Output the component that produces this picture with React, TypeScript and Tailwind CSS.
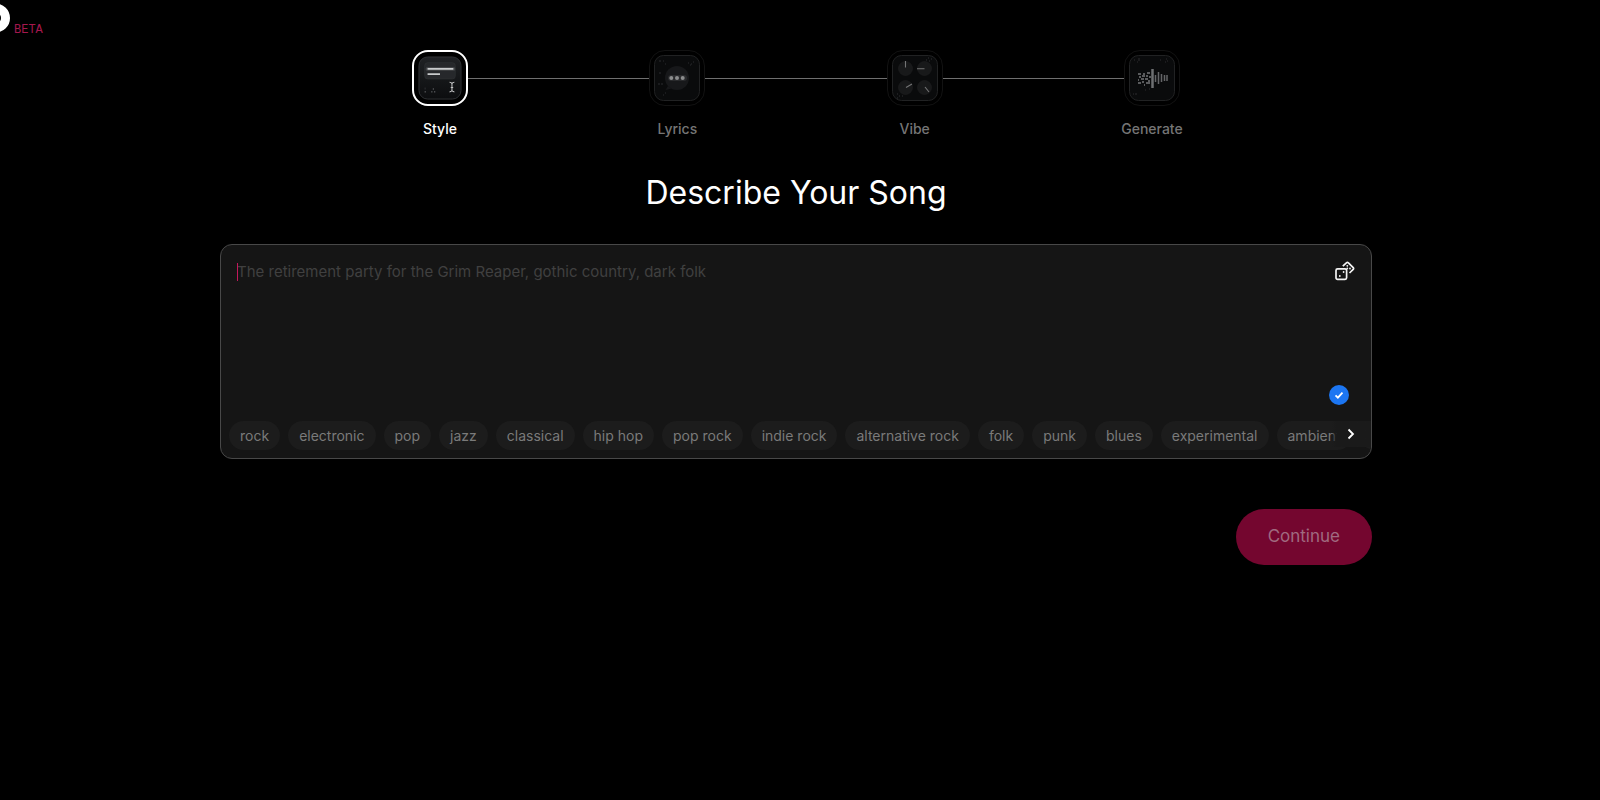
import { Fragment, useState } from "react";
import type { ReactNode } from "react";

const genres = [
  "rock",
  "electronic",
  "pop",
  "jazz",
  "classical",
  "hip hop",
  "pop rock",
  "indie rock",
  "alternative rock",
  "folk",
  "punk",
  "blues",
  "experimental",
  "ambient",
  "soul",
];

function StyleArt() {
  return (
    <svg viewBox="0 0 46 46" className="h-full w-full" aria-hidden="true">
      <defs>
        <linearGradient id="tile" x1="0" y1="0" x2="0" y2="1">
          <stop offset="0" stopColor="#202225" />
          <stop offset="1" stopColor="#0c0d0f" />
        </linearGradient>
      </defs>
      <rect x="1" y="1" width="44" height="44" rx="9" fill="url(#tile)" stroke="#303235" />
      <rect x="7" y="7" width="32" height="17" rx="3" fill="#26282b" stroke="#323437" strokeWidth="0.6" />
      <path d="M10 13.5H37" stroke="#6d6f72" strokeWidth="4" opacity="0.4" strokeLinecap="round" />
      <path d="M10 13.5H37M10 19H23" stroke="#c8cacc" strokeWidth="1.8" />
      <path d="M33 27.5q2 0 2.5 1.5q.5-1.5 2.5-1.5M33 37.5q2 0 2.5-1.5q.5 1.5 2.5 1.5M35.5 29v7M34.2 33h2.6" fill="none" stroke="#c4c5c6" strokeWidth="1.1" />
      <g fill="#94969a">
        <rect x="7" y="37" width="1" height="1" />
        <rect x="14" y="37" width="1" height="1" />
        <rect x="17" y="37" width="1" height="1" />
        <rect x="15.5" y="34" width="1" height="1" />
        <rect x="7" y="33" width="0.8" height="2" opacity="0.3" />
      </g>
    </svg>
  );
}

function LyricsArt() {
  return (
    <svg viewBox="0 0 46 46" className="h-full w-full" aria-hidden="true">
      <rect x="0.5" y="0.5" width="45" height="45" rx="9" fill="#0a0b0c" stroke="#212223" />
      <circle cx="23" cy="23" r="12" fill="#17181a" />
      <path d="M14 31l-2.5 4 6-1.5z" fill="#17181a" />
      <path d="M17 23H30" stroke="#3c3d3f" strokeWidth="6" strokeLinecap="round" opacity="0.5" />
      <g fill="#8c8d8e">
        <circle cx="17.3" cy="23" r="2" />
        <circle cx="23" cy="23" r="2" />
        <circle cx="28.7" cy="23" r="2" />
      </g>
      <path
        d="M5 6h2M9 6h1M11 9h1M34 8h1M37 9h1M39 7h1M36 10h1M5 18h2M4 29h2M7 29h2M9 40h1M11 38h1"
        stroke="#2b2c2e"
      />
    </svg>
  );
}

function VibeArt() {
  return (
    <svg viewBox="0 0 46 46" className="h-full w-full" aria-hidden="true">
      <rect x="0.5" y="0.5" width="45" height="45" rx="9" fill="#0a0b0c" stroke="#212223" />
      <g fill="#18191a" stroke="#1e1f20" strokeWidth="0.6">
        <circle cx="13.5" cy="13.5" r="7" />
        <circle cx="32.5" cy="13.5" r="7" />
        <circle cx="13.5" cy="32.5" r="7" />
        <circle cx="32.5" cy="32.5" r="7" />
      </g>
      <path d="M13.5 6v6.5M25 13.7h7.5M14 32.5l6-3.5M33 32l4 5" stroke="#747576" strokeWidth="1.1" fill="none" />
      <path d="M34 5h1M36 3h1M39 4h1M37 6h1M5 43h1M7 41h1M10 41h1M5 39h1" stroke="#2f3032" />
    </svg>
  );
}

function GenerateArt() {
  return (
    <svg viewBox="0 0 46 46" className="h-full w-full" aria-hidden="true">
      <rect x="0.5" y="0.5" width="45" height="45" rx="9" fill="#0a0b0c" stroke="#212223" />
      <path
        d="M9 19h3M14 19h2M18 18h3M10 22h2M13 21h3M17 21h2M20 22h2M9 25h1M12 24h3M16 24h3M19 26h2M9 28h3M13 27h2M17 28h4M15 30h1"
        stroke="#747577"
        strokeWidth="1.4"
      />
      <path d="M23.5 14v19" stroke="#6e7072" strokeWidth="2.5" />
      <path d="M26.5 20v7M29.5 17v12M32.5 19v8M35.5 20v6M38 20v6" stroke="#646567" strokeWidth="1.5" />
      <path d="M5 5h1M10 3v3M8 7h1M31 5h1M37 4h1M36 7h1M38 6h1M16 35h1M20 34h1M4 39h1M7 38v2" stroke="#2c2d2f" />
    </svg>
  );
}

const steps: { label: string; art: ReactNode }[] = [
  { label: "Style", art: <StyleArt /> },
  { label: "Lyrics", art: <LyricsArt /> },
  { label: "Vibe", art: <VibeArt /> },
  { label: "Generate", art: <GenerateArt /> },
];

function DiceIcon() {
  return (
    <svg width="20" height="20" viewBox="0 0 20 20" fill="none" stroke="#f4f4f4" strokeWidth="1.7" strokeLinejoin="round" aria-hidden="true">
      <rect x="1" y="7.8" width="10.6" height="10.6" rx="1.6" />
      <path d="M7.8 5.2l3.6-3.4q1-.9 2 0l4.8 4.8q.8.9 0 1.8L14.5 12" />
      <g fill="#f4f4f4" stroke="none">
        <circle cx="8.6" cy="11" r="0.9" />
        <circle cx="4.8" cy="15" r="0.9" />
        <circle cx="12.3" cy="4.8" r="0.9" />
        <circle cx="15" cy="7.5" r="0.9" />
        <circle cx="12.3" cy="7.5" r="0.9" />
      </g>
    </svg>
  );
}

export default function App() {
  const [prompt, setPrompt] = useState("");

  const addGenre = (genre: string) => {
    setPrompt(prompt ? `${prompt}, ${genre}` : genre);
  };

  return (
    <div className="relative min-h-screen overflow-hidden bg-black pr-2 font-['Inter',sans-serif] text-white">
      {/* Logo, partly off the left edge */}
      <a href="#" aria-label="Home" className="absolute top-0 left-0 flex">
        <svg width="14" height="36" viewBox="0 0 14 36" aria-hidden="true">
          <circle cx="-4.5" cy="18" r="10" fill="none" stroke="#fff" strokeWidth="9" />
        </svg>
        <span className="mt-[22px] font-['Liberation_Mono',monospace] text-xs leading-4 text-[#a5184e]">BETA</span>
      </a>

      <main className="mx-auto max-w-6xl pt-[50px]">
        {/* Steps */}
        <nav aria-label="Progress" className="mx-auto flex max-w-3xl">
          {steps.map((step, i) => (
            <Fragment key={step.label}>
              {i > 0 && <div className="mt-7 h-px flex-1 bg-[#6f6f6f]" />}
              <button type="button" className="flex w-14 flex-col items-center gap-3">
                <span
                  className={
                    i === 0
                      ? "h-14 w-14 rounded-2xl border-2 border-white p-1"
                      : "h-14 w-14 rounded-2xl border border-[#121212] p-1"
                  }
                >
                  {step.art}
                </span>
                <span
                  className={
                    i === 0
                      ? "text-sm leading-[22px] font-medium text-white"
                      : "text-sm leading-[22px] font-medium text-[#757575]"
                  }
                >
                  {step.label}
                </span>
              </button>
            </Fragment>
          ))}
        </nav>

        <h1 className="mt-[30px] text-center text-[32px] leading-[46px]">Describe Your Song</h1>

        {/* Prompt box */}
        <div className="relative mt-7 overflow-hidden rounded-xl border border-[#484848] bg-[#151515]">
          <textarea
            aria-label="Describe your song"
            value={prompt}
            onChange={(e) => setPrompt(e.target.value)}
            placeholder="The retirement party for the Grim Reaper, gothic country, dark folk"
            className="block h-44 w-full resize-none bg-transparent py-4 pr-16 pl-4 text-[15px] leading-[22px] caret-[#d81b60] outline-none placeholder:text-[#404040]"
          />
          {prompt === "" && <span className="absolute top-[18px] left-4 h-[18px] w-px bg-[#c2185b]" />}
          <button type="button" aria-label="Random prompt" className="absolute top-4 right-4">
            <DiceIcon />
          </button>
          <span className="absolute right-[22px] bottom-[53px] flex h-5 w-5 items-center justify-center rounded-full bg-[#1c76f2]">
            <svg width="10" height="10" viewBox="0 0 10 10" fill="none" stroke="#fff" strokeWidth="1.8" aria-hidden="true">
              <path d="M1.5 5.3l2.4 2.4 4.6-5" />
            </svg>
          </span>

          <div className="flex gap-2 px-2 pb-2">
            {genres.map((genre) => (
              <button
                key={genre}
                type="button"
                onClick={() => addGenre(genre)}
                className="h-[29px] shrink-0 rounded-full bg-[#1c1c1c] px-[11px] text-sm leading-5 text-[#7a7a7a]"
              >
                {genre}
              </button>
            ))}
          </div>
          <button
            type="button"
            aria-label="More genres"
            className="absolute right-0 bottom-[11px] flex h-[26px] w-10 items-center justify-center bg-linear-to-r from-transparent via-[#1a1a1a] via-15% to-[#1a1a1a]"
          >
            <svg width="12" height="14" viewBox="0 0 12 14" fill="none" stroke="#fff" strokeWidth="1.8" aria-hidden="true">
              <path d="M3.5 2.5l4.5 4.5-4.5 4.5" />
            </svg>
          </button>
        </div>

        <div className="mt-[50px] flex justify-end">
          <button type="button" className="h-14 rounded-full bg-[#74062f] px-8 text-[17px] text-[#a06a80]">
            Continue
          </button>
        </div>
      </main>
    </div>
  );
}
